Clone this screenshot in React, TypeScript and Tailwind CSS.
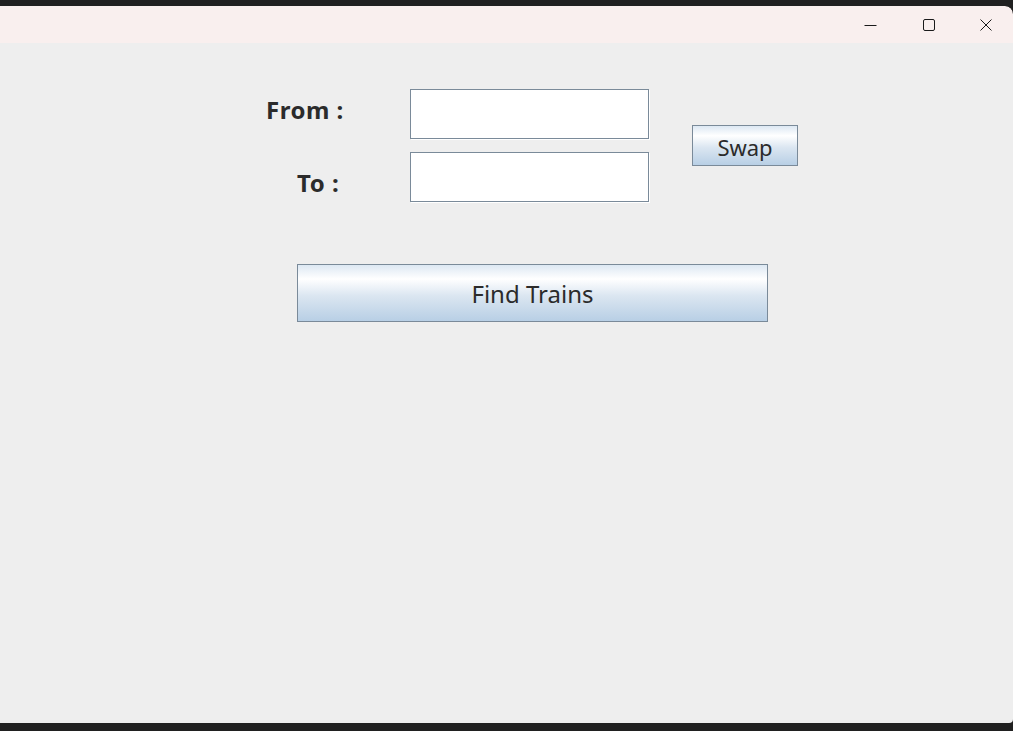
import React from 'react';

function TitleBar() {
  return (
    <div className="flex h-[37px] items-center justify-end bg-[#f9efee] rounded-tr-[8px]">
      <button className="flex h-full w-[58px] items-center justify-center" aria-label="Minimize">
        <svg width="13" height="12" viewBox="0 0 13 12">
          <path d="M0.5 6.5h12" stroke="#1a1a1a" strokeWidth="1" />
        </svg>
      </button>
      <button className="flex h-full w-[60px] items-center justify-center" aria-label="Maximize">
        <svg width="12" height="12" viewBox="0 0 12 12">
          <rect x="0.5" y="0.5" width="11" height="11" rx="1.5" fill="none" stroke="#1a1a1a" strokeWidth="1" />
        </svg>
      </button>
      <button className="flex h-full w-[54px] items-center justify-center" aria-label="Close">
        <svg width="12" height="12" viewBox="0 0 12 12">
          <path d="M0.5 0.5l11 11M11.5 0.5l-11 11" stroke="#1a1a1a" strokeWidth="1" />
        </svg>
      </button>
    </div>
  );
}

const field =
  'h-[50px] w-[239px] border border-[#7a8a99] bg-white shadow-[1px_1px_0_#ffffff] outline-none px-1 text-base';

const swingButton =
  'border border-[#7a8a99] bg-[linear-gradient(to_bottom,#dde8f3_0%,#ffffff_25%,#dbe6f1_55%,#b8cfe5_100%)] text-[#2b2b2b]';

export default function App() {
  const [from, setFrom] = React.useState('');
  const [to, setTo] = React.useState('');

  const swap = () => {
    setFrom(to);
    setTo(from);
  };

  return (
    <div
      className="flex h-[731px] w-[1013px] flex-col bg-[#202020] pt-[6px] pb-[8px]"
      style={{ fontFamily: '"Noto Sans", "DejaVu Sans", sans-serif' }}
    >
      <div className="flex flex-1 flex-col overflow-hidden rounded-tr-[8px] rounded-br-[4px]">
        <TitleBar />
        <div className="flex-1 bg-[#eeeeee] pt-[46px]">
          <div className="flex items-center pl-[266px]">
            <div className="flex flex-col gap-[13px]">
              <div className="flex items-center">
                <label className="-mt-[8px] w-[144px] text-[24px] font-bold tracking-[0.5px] text-[#2b2b2b]">From :</label>
                <input className={field} value={from} onChange={e => setFrom(e.target.value)} />
              </div>
              <div className="flex items-center">
                <label className="mt-[12px] w-[144px] pl-[31px] text-[24px] font-bold tracking-[0.5px] text-[#2b2b2b]">To :</label>
                <input className={field} value={to} onChange={e => setTo(e.target.value)} />
              </div>
            </div>
            <button
              onClick={swap}
              className={`ml-[43px] h-[41px] w-[106px] pt-[2px] text-[22px] leading-none ${swingButton}`}
            >
              Swap
            </button>
          </div>
          <div className="mt-[62px] pl-[297px]">
            <button className={`h-[58px] w-[471px] pt-[2px] text-[24px] leading-none ${swingButton}`}>
              Find Trains
            </button>
          </div>
        </div>
      </div>
    </div>
  );
}
